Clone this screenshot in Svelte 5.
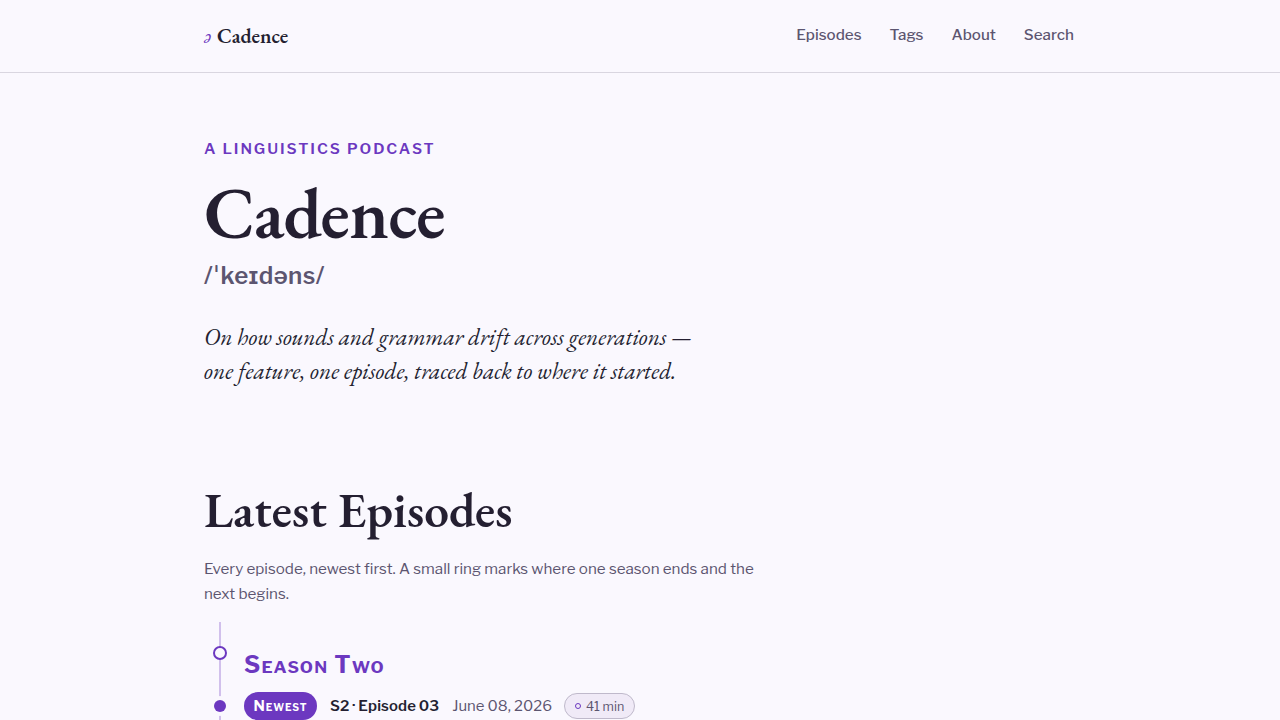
<script lang="ts">
	const navItems = ['Episodes', 'Tags', 'About', 'Search'];

	const latest = {
		season: 'Season Two',
		label: 'S2 · Episode 03',
		date: 'June 08, 2026',
		duration: '41 min'
	};
</script>

<div class="page">
	<header class="site-header">
		<div class="wrap header-row">
			<a class="brand" href="#top"><span class="brand-mark" aria-hidden="true">ə</span>Cadence</a>
			<nav>
				{#each navItems as item (item)}
					<a href="#{item.toLowerCase()}">{item}</a>
				{/each}
			</nav>
		</div>
	</header>

	<main class="wrap">
		<section class="hero">
			<p class="eyebrow">A Linguistics Podcast</p>
			<h1>Cadence</h1>
			<p class="ipa">/ˈkeɪdəns/</p>
			<p class="tagline">
				On how sounds and grammar drift across generations —<br /><span
					>one feature, one episode, traced back to where it started.</span
				>
			</p>
		</section>

		<section>
			<h2>Latest Episodes</h2>
			<p class="intro">
				Every episode, newest first. A small ring marks where one season ends and the next begins.
			</p>
			<ol class="timeline">
				<li class="season">
					<span class="ring"></span>
					<h3>{latest.season}</h3>
				</li>
				<li class="episode">
					<span class="dot"></span>
					<span class="newest">Newest</span>
					<span class="label">{latest.label}</span>
					<time>{latest.date}</time>
					<span class="duration"><i></i>{latest.duration}</span>
				</li>
			</ol>
		</section>
	</main>
</div>

<style>
	:global(body) {
		background: #faf8fe;
	}
	.page {
		height: 100vh;
		overflow: hidden;
		color: #241f31;
		font-family: 'Libre Franklin', 'Liberation Sans', sans-serif;
		font-size: 15.2px;
		line-height: 25px;
	}
	.page * {
		box-sizing: border-box;
	}
	h1,
	h2,
	h3,
	p {
		margin: 0;
	}
	.wrap {
		width: 872px;
		margin: 0 auto;
	}
	.site-header {
		height: 73px;
		border-bottom: 1px solid #d9d6e0;
	}
	.header-row {
		display: flex;
		justify-content: space-between;
		align-items: center;
		height: 72px;
	}
	a {
		color: inherit;
		text-decoration: none;
	}
	.brand {
		display: flex;
		align-items: baseline;
		gap: 6px;
		font: 600 20.8px/32px 'EB Garamond', 'Liberation Serif', serif;
	}
	.brand-mark {
		color: #6c38c0;
		font-weight: 400;
		font-style: italic;
	}
	nav {
		display: flex;
		gap: 28px;
		margin: 0 2px 3px 0;
		color: #5c5570;
		font-weight: 500;
	}
	.hero {
		padding-top: 63px;
	}
	.eyebrow {
		color: #6c38c0;
		font-weight: 600;
		letter-spacing: 0.127em;
		text-transform: uppercase;
	}
	h1,
	h2 {
		font-family: 'EB Garamond', 'Liberation Serif', serif;
		font-weight: 600;
	}
	h1 {
		margin-top: 13px;
		font-size: 72px;
		line-height: 76px;
		letter-spacing: -0.011em;
	}
	.ipa {
		margin-top: 6px;
		color: #5c5570;
		font-size: 24px;
		font-weight: 600;
		line-height: 40px;
		letter-spacing: 0.017em;
	}
	.tagline {
		margin-top: 24px;
		font: italic 400 23.3px/34px 'EB Garamond', 'Liberation Serif', serif;
	}
	.tagline span {
		letter-spacing: 0.05px;
		font-variant-ligatures: common-ligatures;
	}
	h2 {
		margin-top: 94px;
		font-size: 49.6px;
		line-height: 56px;
	}
	.intro {
		width: 560px;
		margin-top: 18px;
		color: #5c5570;
	}
	.timeline {
		position: relative;
		margin: 16px 0 0;
		padding: 0 0 0 40px;
		list-style: none;
	}
	.timeline::before {
		content: '';
		position: absolute;
		top: 0;
		left: 15px;
		width: 2px;
		height: 120px;
		background: #d1c0ec;
	}
	.season,
	.episode {
		position: relative;
	}
	.season {
		padding-top: 24px;
	}
	.ring,
	.dot {
		position: absolute;
		border-radius: 50%;
	}
	.ring {
		top: 24px;
		left: -31px;
		width: 14px;
		height: 14px;
		border: 2px solid #6c38c0;
		background: #faf8fe;
	}
	h3 {
		color: #6c38c0;
		font-size: 24px;
		font-weight: 700;
		line-height: 38px;
		font-variant-caps: small-caps;
		letter-spacing: 0.047em;
	}
	.episode {
		display: flex;
		align-items: center;
		height: 28px;
		margin-top: 8px;
		font-size: 14.9px;
	}
	.dot {
		top: 8px;
		left: -30px;
		width: 12px;
		height: 12px;
		background: #6c38c0;
		box-shadow: 0 0 0 4px #faf8fe;
	}
	.newest {
		width: 73px;
		margin-right: 13px;
		border-radius: 14px;
		background: #6c38c0;
		color: #fff;
		font-weight: 700;
		line-height: 28px;
		text-align: center;
		font-variant-caps: small-caps;
		letter-spacing: 0.06em;
	}
	.label {
		margin-right: 13px;
		font-weight: 600;
		letter-spacing: 0.14px;
		word-spacing: -0.7px;
	}
	time {
		margin-right: 12px;
		color: #5c5570;
	}
	.duration {
		display: flex;
		align-items: center;
		gap: 5px;
		width: 71px;
		height: 26px;
		padding: 0 10px;
		border: 1px solid #bfb9cb;
		border-radius: 13px;
		background: #f0eaf7;
		color: #5c5570;
		font-size: 12.5px;
		line-height: 23px;
		white-space: nowrap;
	}
	.duration i {
		flex: none;
		width: 6px;
		height: 6px;
		border: 1.5px solid #6c38c0;
		border-radius: 50%;
	}
</style>
